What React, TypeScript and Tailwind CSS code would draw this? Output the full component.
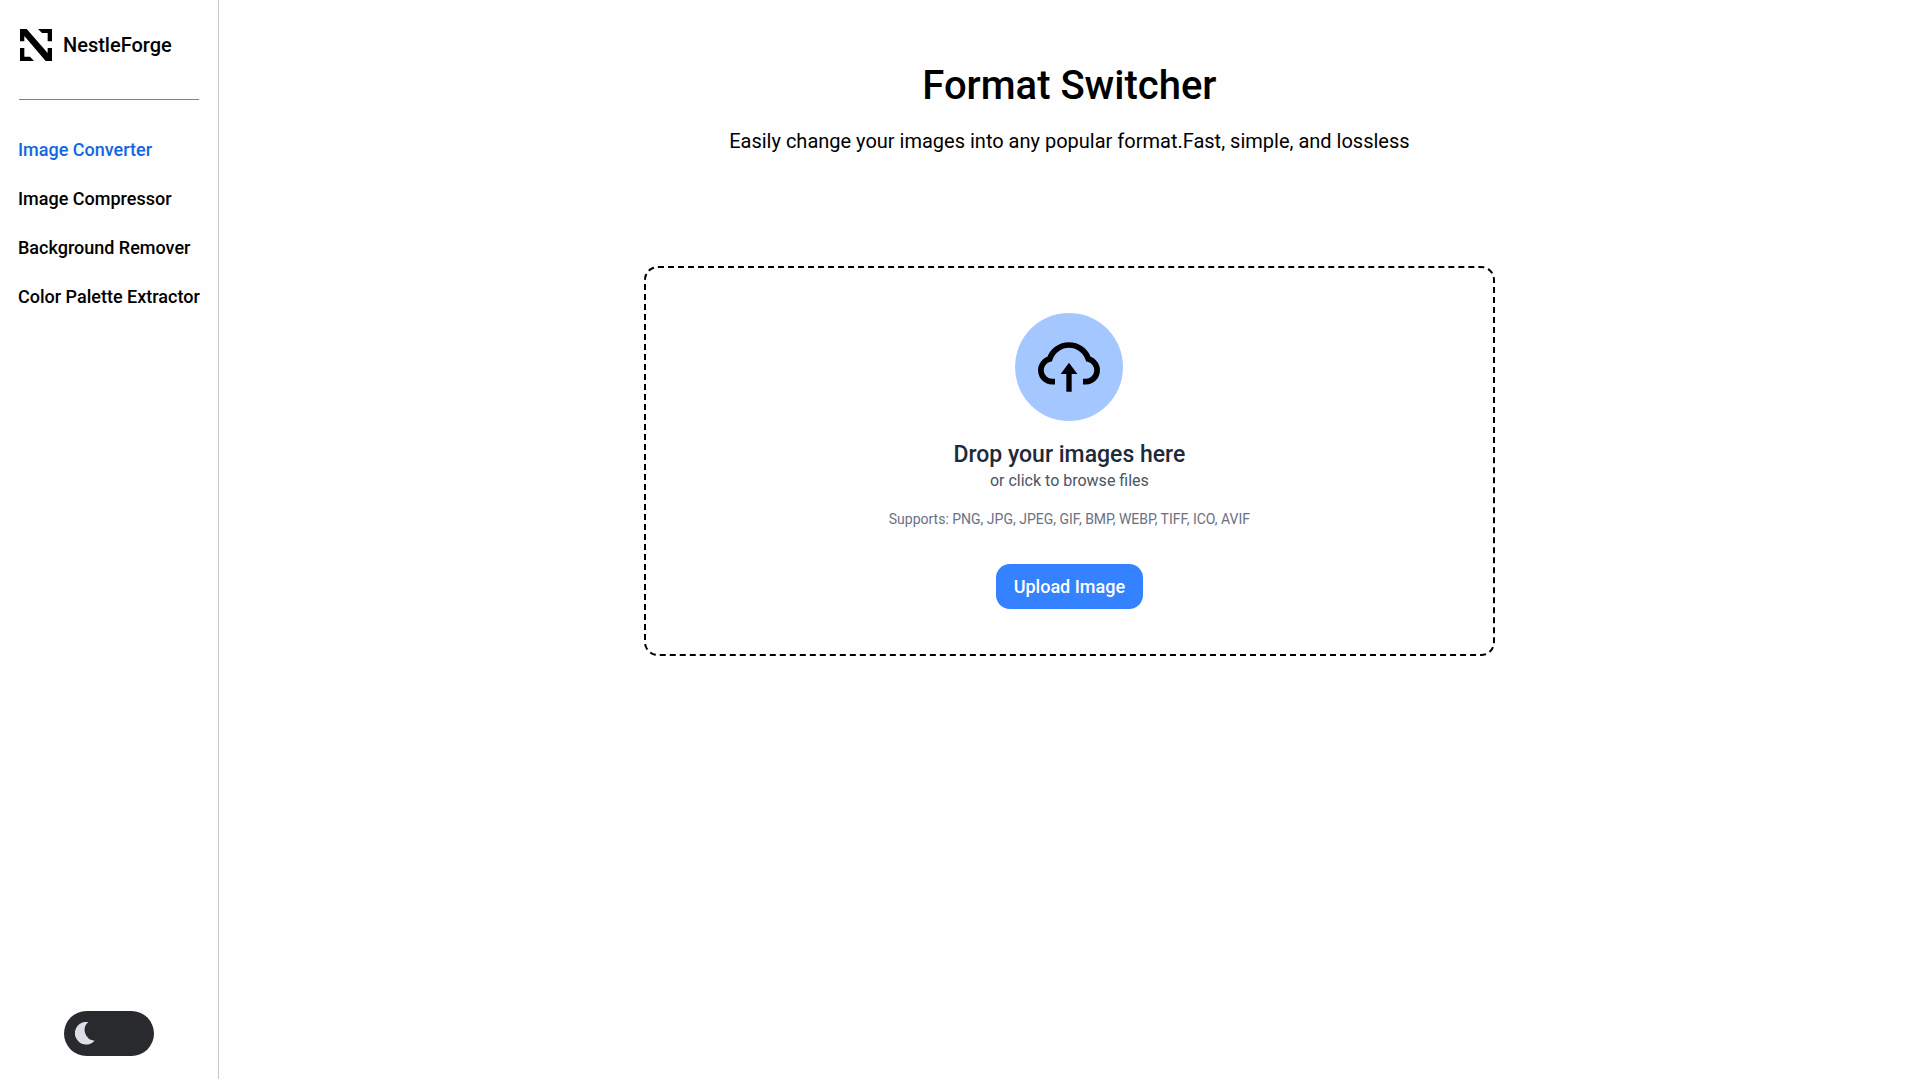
const links = [
  "Image Converter",
  "Image Compressor",
  "Background Remover",
  "Color Palette Extractor",
];

function Logo() {
  return (
    <svg viewBox="0 0 96 96" className="size-8 shrink-0" fill="#000" aria-hidden="true">
      <path d="M0 0H20L83 72V57H96V96H77L13 21V37H0Z" />
      <path d="M54 0H96V37H83V12H66Z" />
      <path d="M0 57H13V83H30L42 96H0Z" />
    </svg>
  );
}

function CloudUpload() {
  return (
    <svg viewBox="0 0 324 324" className="size-[108px]" aria-hidden="true">
      <path
        d="M120 206H111A34.5 34.5 0 0 1 104 138A61 61 0 0 1 220 138A34.5 34.5 0 0 1 213 206H204"
        fill="none"
        stroke="#000"
        strokeWidth="17"
      />
      <path d="M162 149L187 183H170V236H154V183H137Z" fill="#000" />
    </svg>
  );
}

function Sidebar() {
  return (
    <aside className="flex shrink-0 flex-col border-r border-[#c8c8c8] px-[18px] pt-[29px] pb-[23px]">
      <a href="#" className="flex items-center gap-[11px] pl-0.5 text-xl leading-[30px] font-medium">
        <Logo />
        NestleForge
      </a>
      <hr className="mx-px mt-[38px] border-[#808080]" />
      <nav className="mt-[38px] flex flex-col gap-[25px] whitespace-nowrap">
        {links.map((label, i) => (
          <a
            key={label}
            href="#"
            aria-current={i === 0 ? "page" : undefined}
            className={
              i === 0
                ? "text-lg leading-6 font-medium text-[#1266e3]"
                : "text-lg leading-6 font-medium text-black"
            }
          >
            {label}
          </a>
        ))}
      </nav>
      <button
        type="button"
        role="switch"
        aria-checked="false"
        aria-label="Dark mode"
        className="mt-auto flex h-[45px] w-[90px] items-center self-center rounded-full bg-[#282a2e] pl-[11px]"
      >
        <svg viewBox="0 0 60 69" className="h-[23px] w-5" fill="#dcdfe6" aria-hidden="true">
          <path d="M40 0A34 34 0 1 0 59 56A32 32 0 0 1 40 0Z" />
        </svg>
      </button>
    </aside>
  );
}

export default function App() {
  return (
    <div className="flex min-h-screen bg-[#fefefe] font-[Roboto,sans-serif] text-black">
      <Sidebar />
      <main className="flex flex-1 flex-col items-center px-6 pt-[60px] text-center">
        <h1 className="text-[40px] leading-[52px] font-medium">Format Switcher</h1>
        <p className="mt-3.5 text-xl leading-[30px]">
          Easily change your images into any popular format.Fast, simple, and lossless
        </p>
        <section className="mt-[110px] flex w-full max-w-[851px] flex-col items-center rounded-[14px] border-2 border-dashed border-black py-[45px]">
          <div className="rounded-full bg-[#a5c7ff]">
            <CloudUpload />
          </div>
          <h2 className="mt-5 text-[23px] leading-7 font-medium text-[#1e2939]">
            Drop your images here
          </h2>
          <p className="text-base leading-6 text-[#4a5565]">or click to browse files</p>
          <p className="mt-4 text-sm leading-5 text-[#6a7282]">
            Supports: PNG, JPG, JPEG, GIF, BMP, WEBP, TIFF, ICO, AVIF
          </p>
          <button
            type="button"
            className="mt-[35px] h-[45px] rounded-[14px] bg-[#3482ff] px-[18px] text-lg font-medium text-white"
          >
            Upload Image
          </button>
        </section>
      </main>
    </div>
  );
}
